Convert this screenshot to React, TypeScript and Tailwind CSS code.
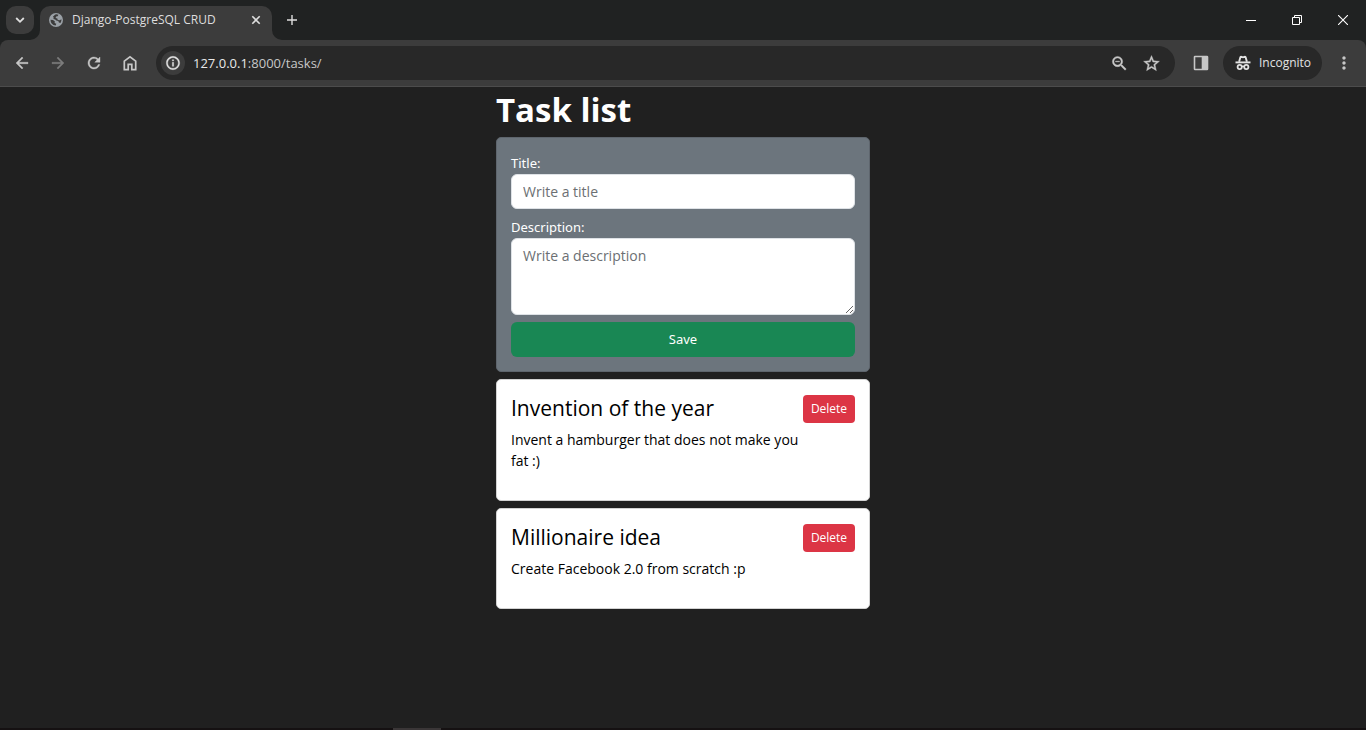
import type { ReactNode } from "react";
import {
  MdArrowBack,
  MdArrowForward,
  MdInfoOutline,
  MdMoreVert,
  MdOutlineZoomOut,
  MdRefresh,
  MdStarBorder,
} from "react-icons/md";

type Task = { id: number; title: string; description: string };

const tasks: Task[] = [
  {
    id: 1,
    title: "Invention of the year",
    description: "Invent a hamburger that does not make you fat :)",
  },
  { id: 2, title: "Millionaire idea", description: "Create Facebook 2.0 from scratch :p" },
];

// Thickens the glyph while leaving the icon's invisible bounding path unstroked.
const boldIcon = "stroke-current stroke-[0.5] [&>path[fill=none]]:stroke-none";

function IconButton({ label, className, children }: { label: string; className: string; children: ReactNode }) {
  return (
    <button type="button" aria-label={label} className={`flex shrink-0 items-center justify-center ${className}`}>
      {children}
    </button>
  );
}

function GlobeIcon() {
  return (
    <svg className="shrink-0" width="16" height="16" viewBox="0 0 16 16">
      <circle cx="8" cy="8" r="7" fill="#9aa0a6" />
      <path
        d="M7.2 2.5q1.8-.5 3.3.3l-.9 1.5-1.5.3-.5 1.3 1.7.7.5 1.4 2 .2 1.6-1q.3 2.2-.9 3.8l-1.6-.4-.6-1.7-2-.3-1.1-1.2-1.7-.4.1-1.7-.7-.6z"
        fill="#3c3c3c"
      />
      <path d="M2.5 7.8 5 8.1l1.9 1.5-.3 1.5 1.7.7-.6 1.8q-2.6-.2-4-2.1-1.2-1.5-1.2-3.7z" fill="#3c3c3c" />
    </svg>
  );
}

function HomeIcon() {
  return (
    <svg width="18" height="18" viewBox="0 0 18 18" fill="none" stroke="currentColor" strokeWidth="1.7">
      <path d="M3.3 7.2 9 2.8l5.7 4.4v8.4h-3.9v-5.2H7.2v5.2H3.3z" />
    </svg>
  );
}

function IncognitoIcon() {
  return (
    <svg width="16" height="16" viewBox="0 0 16 16" fill="none" stroke="currentColor">
      <path d="M4.1 6.8 5.3 2.5q.3-1 1.2-.7L8 2.3l1.5-.5q.9-.3 1.2.7l1.2 4.3" strokeWidth="1.9" />
      <path d="M.5 7.4h15" strokeWidth="1.9" />
      <circle cx="4.7" cy="12" r="2.1" strokeWidth="1.8" />
      <circle cx="11.3" cy="12" r="2.1" strokeWidth="1.8" />
      <path d="M6.6 11.7q1.4-.9 2.8 0" strokeWidth="1.5" />
    </svg>
  );
}

function SidePanelIcon() {
  return (
    <svg width="16" height="16" viewBox="0 0 16 16" fill="currentColor">
      <path
        fillRule="evenodd"
        d="M2 .7h12a1.3 1.3 0 0 1 1.3 1.3v12a1.3 1.3 0 0 1-1.3 1.3H2A1.3 1.3 0 0 1 .7 14V2A1.3 1.3 0 0 1 2 .7zm.3 1.6v11.4h6.4V2.3z"
      />
    </svg>
  );
}

function TabStrip() {
  return (
    <div className="flex h-10 items-start bg-[#202222] text-[#dedede]">
      <IconButton label="Search tabs" className="mt-[6px] ml-[6px] size-7 rounded-[10px] bg-[#3c3c3c]">
        <svg width="10" height="10" viewBox="0 0 10 10" fill="none" stroke="currentColor" strokeWidth="1.8">
          <path d="M1.2 3 5 6.8 8.8 3" />
        </svg>
      </IconButton>
      <div className="relative mt-[6px] ml-[6px] flex h-[34px] w-[232px] items-center rounded-t-[10px] bg-[#3c3c3c] pb-[6px] pl-2">
        <svg className="absolute bottom-0 -left-[10px] text-[#3c3c3c]" width="10" height="10" viewBox="0 0 10 10" fill="currentColor">
          <path d="M10 0v10H0A10 10 0 0 0 10 0z" />
        </svg>
        <svg className="absolute -right-[10px] bottom-0 text-[#3c3c3c]" width="10" height="10" viewBox="0 0 10 10" fill="currentColor">
          <path d="M0 0v10h10A10 10 0 0 1 0 0z" />
        </svg>
        <GlobeIcon />
        <span className="ml-2 flex-1 text-[12px] leading-4 whitespace-nowrap">Django-PostgreSQL CRUD</span>
        <IconButton label="Close tab" className="mr-2 size-4">
          <svg width="10" height="10" viewBox="0 0 10 10" fill="none" stroke="currentColor" strokeWidth="1.6">
            <path d="m1.3 1.3 7.4 7.4m0-7.4L1.3 8.7" />
          </svg>
        </IconButton>
      </div>
      <IconButton label="New tab" className="mt-[6px] ml-[6px] size-7">
        <svg width="10" height="10" viewBox="0 0 10 10" fill="none" stroke="currentColor" strokeWidth="1.4">
          <path d="M5 0v10M0 5h10" />
        </svg>
      </IconButton>
      <div className="ml-auto flex h-10 text-white">
        <IconButton label="Minimize" className="w-[46px]">
          <svg width="10" height="10" viewBox="0 0 10 10" fill="none" stroke="currentColor">
            <path d="M0 5.5h10" />
          </svg>
        </IconButton>
        <IconButton label="Restore" className="w-[46px]">
          <svg width="10" height="10" viewBox="0 0 10 10" fill="none" stroke="currentColor">
            <path d="M.5 2.5h7v7h-7zM2.5 2.5v-2h7v7h-2" />
          </svg>
        </IconButton>
        <IconButton label="Close" className="w-[46px]">
          <svg width="10" height="10" viewBox="0 0 10 10" fill="none" stroke="currentColor" strokeWidth="1.1">
            <path d="m0 0 10 10M10 0 0 10" />
          </svg>
        </IconButton>
      </div>
    </div>
  );
}

function Toolbar() {
  return (
    <div className="bg-[#202222]">
      <div className="flex h-[47px] items-center rounded-t-lg border-b border-[#4c4c4c] bg-[#3c3c3c] px-2 text-[#c7c7c7]">
        <div className="flex gap-2">
          <IconButton label="Back" className="size-7">
            <MdArrowBack className={`size-[18px] ${boldIcon}`} />
          </IconButton>
          <IconButton label="Forward" className="size-7 text-[#7c7c7c]">
            <MdArrowForward className={`size-[18px] ${boldIcon}`} />
          </IconButton>
          <IconButton label="Reload" className="size-7">
            <MdRefresh className={`size-[18px] ${boldIcon}`} />
          </IconButton>
          <IconButton label="Home" className="size-7">
            <HomeIcon />
          </IconButton>
        </div>
        <div className="ml-3 flex h-[34px] min-w-0 flex-1 items-center rounded-full bg-[#282828] pr-[14px] pl-[5px]">
          <IconButton label="Site information" className="size-6 rounded-full bg-[#3c3c3c] text-[#e3e3e3]">
            <MdInfoOutline className={`size-4 ${boldIcon}`} />
          </IconButton>
          <div className="ml-2 flex-1 text-[13px] leading-5 text-[#c7c7c7]">
            <span className="text-[#e8e8e8]">127.0.0.1</span>:8000/tasks/
          </div>
          <IconButton label="Zoom" className="mr-3 size-5">
            <MdOutlineZoomOut className={`size-[19px] ${boldIcon}`} />
          </IconButton>
          <IconButton label="Bookmark this tab" className="size-5">
            <MdStarBorder className={`size-[19px] ${boldIcon}`} />
          </IconButton>
        </div>
        <IconButton label="Side panel" className="ml-3 size-7">
          <SidePanelIcon />
        </IconButton>
        <button type="button" className="ml-2 flex h-[34px] w-[99px] items-center gap-2 rounded-full bg-[#282828] pl-3 text-[12px] text-[#e3e3e3]">
          <IncognitoIcon />
          Incognito
        </button>
        <IconButton label="Menu" className="ml-2 size-7">
          <MdMoreVert className="size-5" />
        </IconButton>
      </div>
    </div>
  );
}

function TaskForm() {
  const field =
    "block w-full rounded-md border border-[#dee2e6] bg-white px-[11px] font-['Open_Sans',sans-serif] text-[14px] leading-[21px] text-[#212529] placeholder:text-[#6c6f73]";
  return (
    <form className="rounded-[5px] border border-[#5e656d] bg-[#6c757d] p-[14px] font-['Noto_Sans',sans-serif] text-[13px] text-white" onSubmit={(e) => e.preventDefault()}>
      <label htmlFor="title" className="block leading-[22px]">
        Title:
      </label>
      <input id="title" type="text" placeholder="Write a title" className={`${field} h-[35px]`} />
      <label htmlFor="description" className="mt-[7px] block leading-[22px]">
        Description:
      </label>
      <textarea id="description" placeholder="Write a description" className={`${field} h-[77px] resize-y py-[6px]`} />
      <button type="submit" className="mt-[7px] h-[35px] w-full rounded-md bg-[#198754]">
        Save
      </button>
    </form>
  );
}

function TaskCard({ task }: { task: Task }) {
  return (
    <article className="flex items-start justify-between rounded-[5px] border border-[#d2d2d2] bg-white px-[14px] pt-[15px] pb-[14px] text-black">
      <div className="min-w-0">
        <h2 className="text-[21px] leading-[26px]">{task.title}</h2>
        <p className="mt-2 mb-[15px] text-[14px] leading-[21px]">{task.description}</p>
      </div>
      <button type="button" className="h-7 w-[52px] shrink-0 rounded bg-[#dc3545] text-[12px] text-white">
        Delete
      </button>
    </article>
  );
}

export default function App() {
  return (
    <div className="flex min-h-screen flex-col bg-[#202020] font-['Open_Sans',sans-serif]">
      <header>
        <TabStrip />
        <Toolbar />
      </header>
      <main className="mx-auto w-full max-w-[374px] flex-1">
        <h1 className="pt-[2px] pb-[6px] text-[33px] leading-[42px] font-bold text-white">Task list</h1>
        <div className="flex flex-col gap-[7px]">
          <TaskForm />
          {tasks.map((task) => (
            <TaskCard key={task.id} task={task} />
          ))}
        </div>
      </main>
      <footer className="flex h-[2px] bg-[#151112]">
        <div className="ml-[28.8%] w-12 bg-[#3a3637]" />
      </footer>
    </div>
  );
}
